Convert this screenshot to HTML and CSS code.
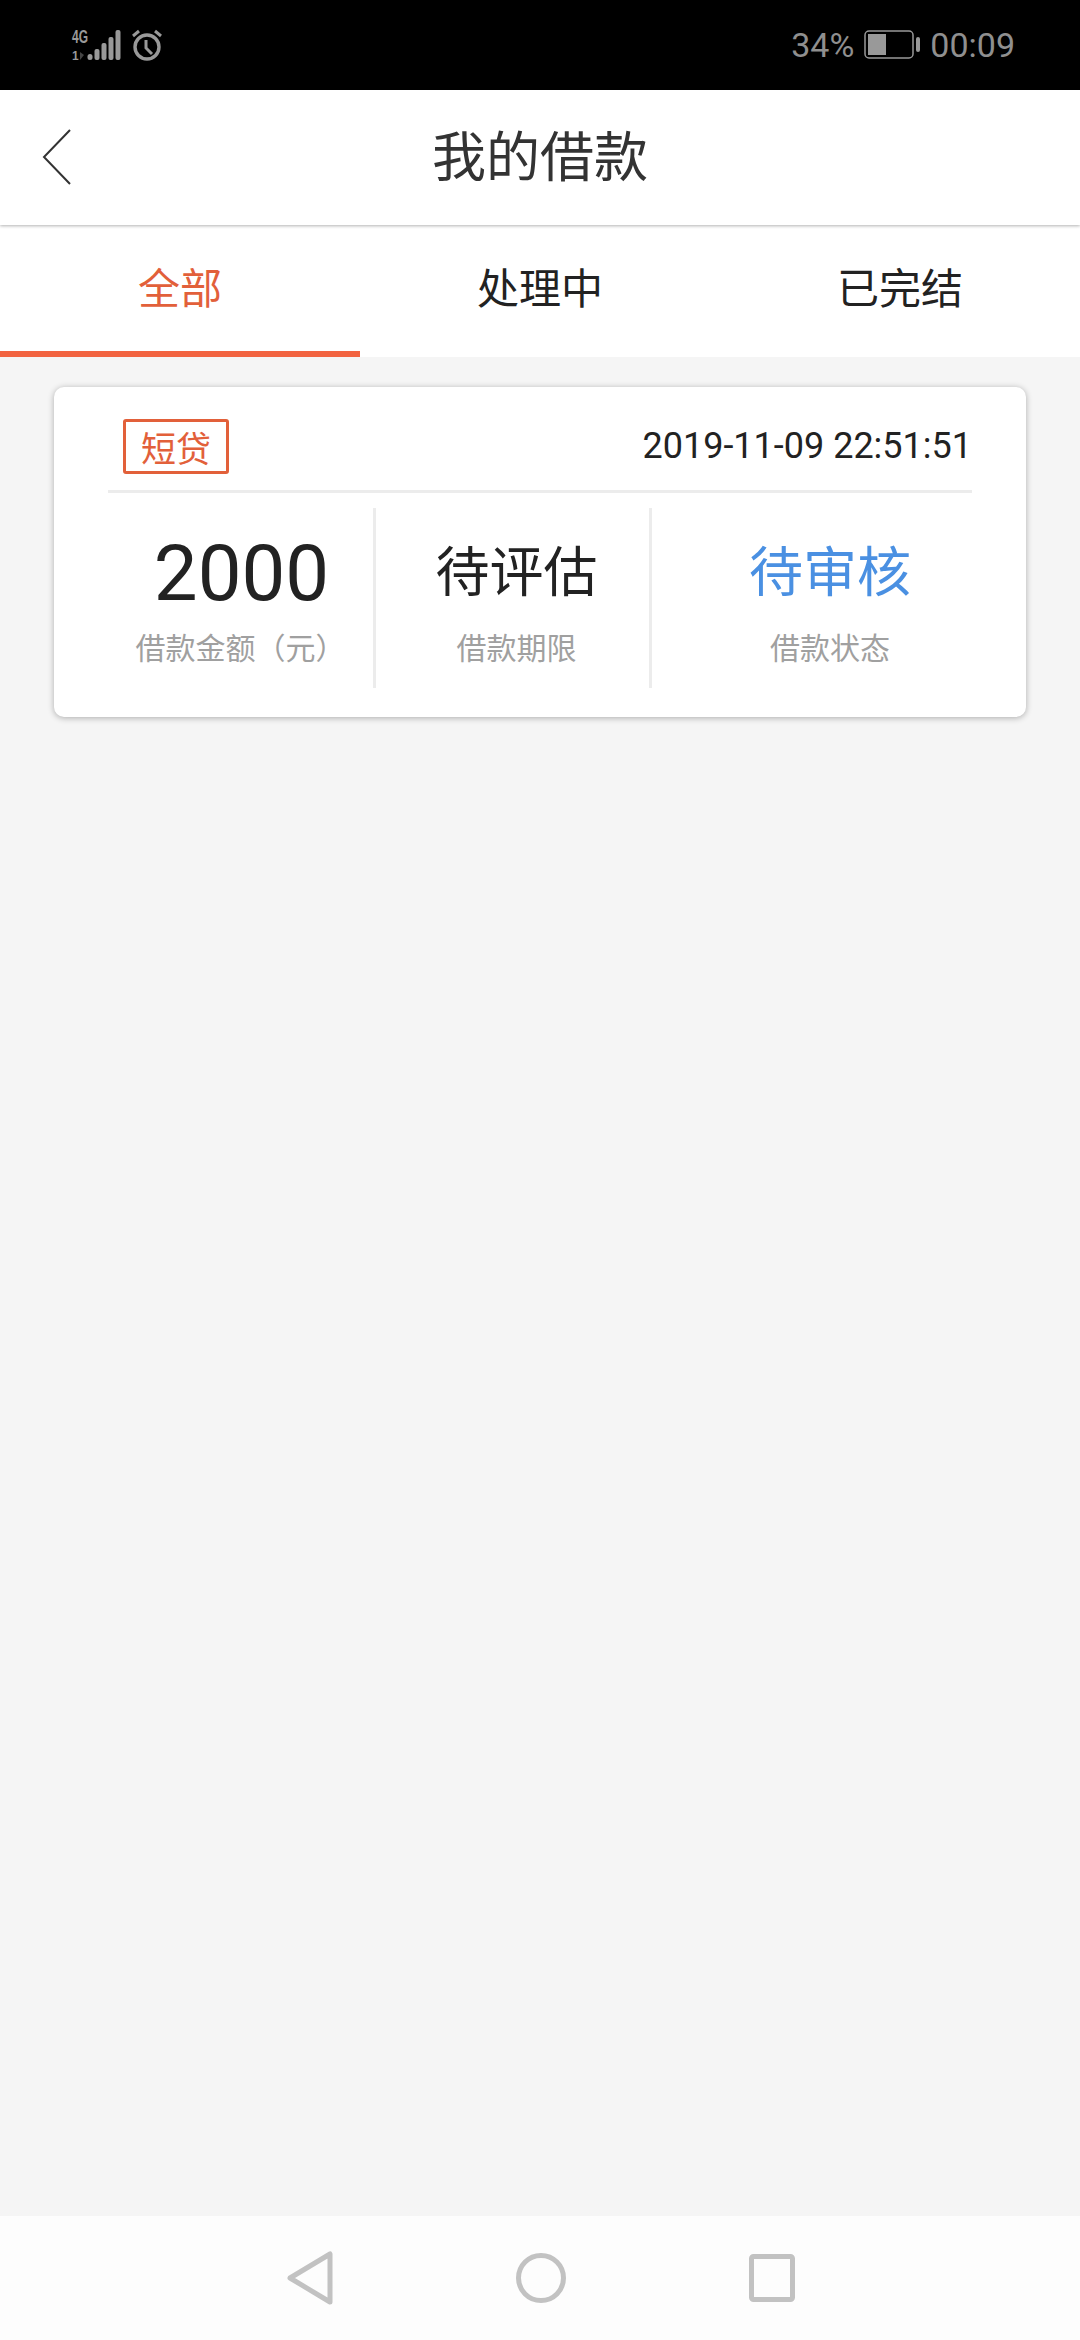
FILE: index.html
```html
<!DOCTYPE html>
<html lang="zh">
<head>
    <meta charset="UTF-8">
    <meta name="viewport" content="width=device-width, initial-scale=1.0">
    <title>我的借款</title>
    <link rel="stylesheet" href="styles.css">
</head>
<body>
    <div class="status-bar">
        <div class="status-left">
            <svg class="signal" width="54" height="40" viewBox="0 -3 54 40">
                <text class="signal-4g" x="1" y="15" textLength="16" lengthAdjust="spacingAndGlyphs">4G</text>
                <text class="signal-1" x="1" y="32">1</text>
                <path d="M9 24l4 3-4 5z" fill="#444"/>
                <rect x="16.500" y="26" width="5" height="6" rx="2.500" fill="#999"/>
                <rect x="23.500" y="21" width="5" height="11" rx="2" fill="#999"/>
                <rect x="30.500" y="15" width="5" height="17" rx="2" fill="#999"/>
                <rect x="37.500" y="9" width="5" height="23" rx="2" fill="#999"/>
                <rect x="44.500" y="2" width="5" height="30" rx="2" fill="#999"/>
            </svg>
            <svg class="alarm" width="32" height="34" viewBox="0 0 32 34" fill="none" stroke="#999">
                <circle cx="16" cy="19" r="12" stroke-width="3.400"/>
                <path d="M15 12v8l6 6" stroke-width="3"/>
                <path d="M2 8l6-5M30 8l-6-5" stroke-width="3"/>
            </svg>
        </div>
        <div class="status-right">
            <span>34%</span>
            <svg class="battery" width="56" height="30" viewBox="0 0 56 30">
                <rect x="1" y="1" width="48" height="27" rx="4" fill="none" stroke="#999" stroke-width="1.500"/>
                <rect x="4" y="4" width="18" height="21" fill="#999"/>
                <rect x="52" y="7" width="4" height="15" rx="2" fill="#999"/>
            </svg>
            <span>00:09</span>
        </div>
    </div>

    <header class="title-bar">
        <svg class="back-icon" width="30" height="56" viewBox="0 0 30 56">
            <path d="M28 1L2 28l26 27" fill="none" stroke="#333" stroke-width="2"/>
        </svg>
        <h1>我的借款</h1>
    </header>

    <nav class="tabs">
        <div class="tab active">全部</div>
        <div class="tab">处理中</div>
        <div class="tab">已完结</div>
    </nav>

    <main class="content">
        <div class="loan-card">
            <div class="card-top">
                <span class="loan-tag">短贷</span>
                <span class="loan-date">2019-11-09 22:51:51</span>
            </div>
            <div class="card-info">
                <div class="info-col col-amount">
                    <div class="info-value amount">2000</div>
                    <div class="info-label">借款金额（元）</div>
                </div>
                <div class="info-col col-term">
                    <div class="info-value">待评估</div>
                    <div class="info-label">借款期限</div>
                </div>
                <div class="info-col col-status">
                    <div class="info-value pending">待审核</div>
                    <div class="info-label">借款状态</div>
                </div>
            </div>
        </div>
    </main>

    <footer class="nav-bar">
        <svg width="46" height="56" viewBox="0 0 46 56">
            <path d="M43 4v48L3 28z" fill="none" stroke="#c2c2c2" stroke-width="5" stroke-linejoin="round"/>
        </svg>
        <svg width="50" height="56" viewBox="0 0 50 56">
            <circle cx="25" cy="28" r="22.500" fill="none" stroke="#c2c2c2" stroke-width="5"/>
        </svg>
        <svg width="46" height="56" viewBox="0 0 46 56">
            <rect x="2.500" y="6.500" width="41" height="43" rx="2" fill="none" stroke="#c2c2c2" stroke-width="5"/>
        </svg>
    </footer>
</body>
</html>
```

FILE: styles.css
```css
* {
    margin: 0;
    padding: 0;
    box-sizing: border-box;
}

body {
    width: 1080px;
    height: 2340px;
    display: flex;
    flex-direction: column;
    background: #f5f5f5;
    font-family: Roboto, "Noto Sans CJK SC", sans-serif;
    overflow: hidden;
}

.status-bar {
    height: 90px;
    flex-shrink: 0;
    display: flex;
    align-items: center;
    justify-content: space-between;
    background: #000;
    padding: 0 65px 0 71px;
    color: #8f8f8f;
    font-size: 34px;
}

.status-left {
    display: flex;
    align-items: center;
    gap: 6px;
}

.signal-4g,
.signal-1 {
    font-family: "Liberation Sans", sans-serif;
    font-weight: bold;
    fill: #999;
}

.signal-4g {
    font-size: 18px;
}

.signal-1 {
    font-size: 12px;
}

.status-right {
    display: flex;
    align-items: center;
    gap: 10px;
}

.title-bar {
    height: 135px;
    flex-shrink: 0;
    display: flex;
    align-items: center;
    justify-content: center;
    position: relative;
    background: #fff;
    box-shadow: 0 1px 3px rgba(0, 0, 0, 0.3);
    padding-bottom: 8px;
}

.back-icon {
    position: absolute;
    left: 42px;
    top: 39px;
}

.title-bar h1 {
    font-size: 54px;
    font-weight: 400;
    color: #333;
}

.tabs {
    height: 132px;
    flex-shrink: 0;
    display: flex;
    background: #fff;
}

.tab {
    width: 360px;
    display: flex;
    align-items: center;
    justify-content: center;
    font-size: 42px;
    color: #222;
    border-bottom: 6px solid transparent;
    padding-bottom: 6px;
}

.tab.active {
    color: #e2603a;
    border-bottom-color: #f26340;
}

.content {
    flex: 1;
    padding: 30px 54px;
}

.loan-card {
    height: 330px;
    background: #fff;
    border-radius: 10px;
    box-shadow: 0 1px 6px rgba(0, 0, 0, 0.3);
    padding: 33px 54px 30px;
}

.card-top {
    display: flex;
    align-items: center;
    justify-content: space-between;
    height: 73px;
    padding: 0 0 18px 15px;
    border-bottom: 3px solid #ececec;
}

.loan-tag {
    width: 106px;
    height: 55px;
    display: flex;
    align-items: center;
    justify-content: center;
    border: 3px solid #e2603a;
    border-radius: 3px;
    color: #e2603a;
    font-size: 35px;
}

.loan-date {
    font-size: 36px;
    color: #222;
}

.card-info {
    display: flex;
    margin-top: 15px;
    height: 180px;
}

.info-col {
    display: flex;
    flex-direction: column;
    align-items: center;
    padding-top: 22px;
}

.col-amount {
    width: 268px;
    border-right: 3px solid #ececec;
}

.col-term {
    width: 276px;
    padding-left: 8px;
    border-right: 3px solid #ececec;
}

.col-status {
    flex: 1;
    padding-left: 36px;
}

.info-value {
    height: 88px;
    line-height: 88px;
    font-size: 54px;
    color: #222;
}

.amount {
    font-size: 78px;
    margin-left: 2px;
}

.pending {
    color: #4a90e2;
}

.info-label {
    margin-top: 6px;
    font-size: 30px;
    color: #a0a0a0;
}

.nav-bar {
    height: 124px;
    flex-shrink: 0;
    display: flex;
    align-items: center;
    background: #fdfdfd;
    padding-left: 287px;
    gap: 183px;
}
```
